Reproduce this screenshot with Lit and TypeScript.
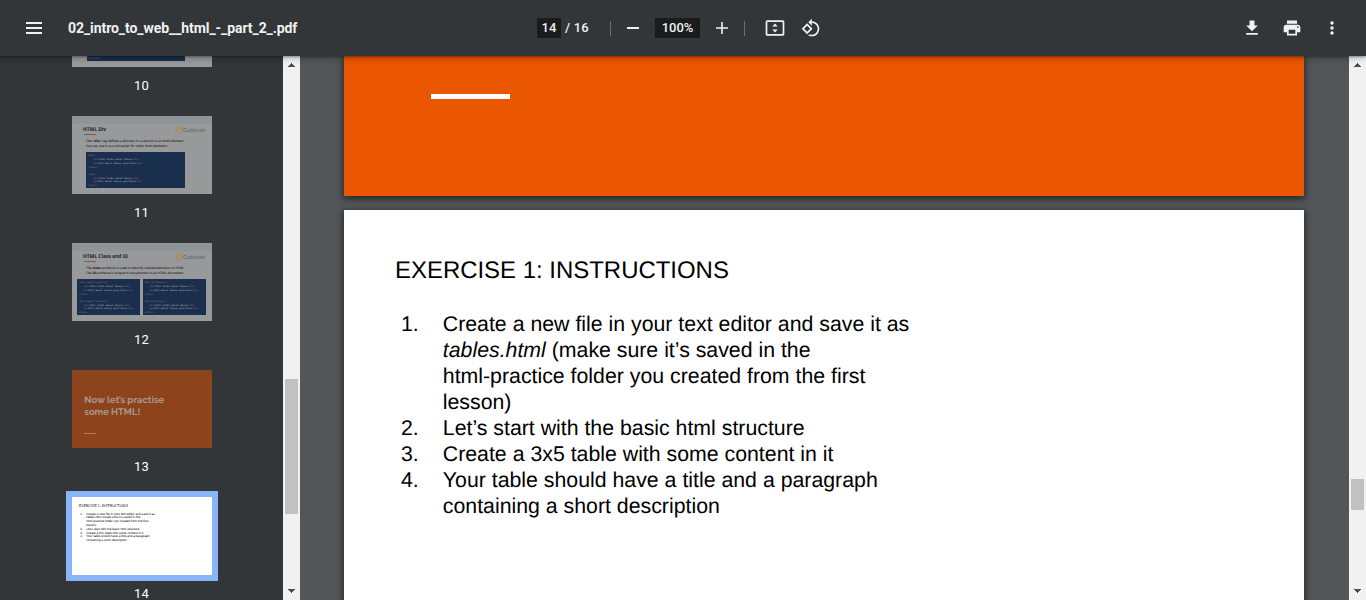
import { LitElement, html, css, svg } from "lit";
import { customElement } from "lit/decorators.js";

const icon = (path: string) =>
  html`<svg class="icon" viewBox="0 0 24 24"><path d=${path} /></svg>`;

const ICONS = {
  rotate:
    "M7.34 6.41L.86 12.9l6.49 6.48 6.49-6.48-6.5-6.49zM3.69 12.9l3.66-3.66L11 12.9l-3.66 3.66-3.65-3.66zm15.67-6.26C17.61 4.88 15.3 4 13 4V.76L8.76 5 13 9.24V6c1.79 0 3.58.68 4.95 2.05 2.73 2.73 2.73 7.17 0 9.9C16.58 19.32 14.79 20 13 20c-.97 0-1.94-.21-2.84-.61l-1.49 1.49C10.02 21.62 11.51 22 13 22c2.3 0 4.61-.88 6.36-2.64 3.52-3.51 3.52-9.21 0-12.72z",
  download: "M19 9h-4V3H9v6H5l7 7 7-7zM5 18v2h14v-2H5z",
  print:
    "M19 8H5c-1.66 0-3 1.34-3 3v6h4v4h12v-4h4v-6c0-1.66-1.34-3-3-3zm-3 11H8v-5h8v5zm3-7c-.55 0-1-.45-1-1s.45-1 1-1 1 .45 1 1-.45 1-1 1zm-1-9H6v4h12V3z",
  more:
    "M12 8c1.1 0 2-.9 2-2s-.9-2-2-2-2 .9-2 2 .9 2 2 2zm0 2c-1.1 0-2 .9-2 2s.9 2 2 2 2-.9 2-2-.9-2-2-2zm0 6c-1.1 0-2 .9-2 2s.9 2 2 2 2-.9 2-2-.9-2-2-2z",
};

type Line = [x: number, y: number, width: number, text: string];

const lines = (items: Line[], cls: string) =>
  items.map(
    ([x, y, w, t]) =>
      svg`<text class=${cls} x=${x} y=${y} textLength=${w} lengthAdjust="spacingAndGlyphs">${t}</text>`
  );

const slideFrame = (title: string, width: number) => svg`
  <rect width="140" height="78" fill="#97999a" />
  <rect width="140" height="8" fill="#8e9497" />
  <text class="title" x="11" y="15.3" textLength=${width} lengthAdjust="spacingAndGlyphs">${title}</text>
  <rect x="12" y="18" width="6" height="1" fill="#2c7a70" />
  <rect x="18" y="18" width="6" height="1" fill="#a14f2b" />
  <circle cx="107" cy="13.5" r="3.4" fill="none" stroke="#b5863c" stroke-width=".8" />
  <text class="badge" x="103.5" y="15.2" textLength="7.2" lengthAdjust="spacingAndGlyphs">&lt;/&gt;</text>
  <text class="brand" x="111" y="16" textLength="22.5" lengthAdjust="spacingAndGlyphs">Codetrain</text>`;

const codeBlock = (x: number, tag1: string, tag2: string, c1: string, c2: string) => svg`
  ${lines([[x, 40, tag1.length * 1.4, tag1], [x, 58.6, tag2.length * 1.4, tag2], [x, 51.5, 9, "</div>"], [x, 70.2, 9, "</div>"]], "tag")}
  ${[[43.8, c1, "h"], [47.6, c1, "p"], [62.5, c2, "h"], [66.3, c2, "p"]].map(([y, c, kind]) =>
    kind === "h"
      ? svg`<text class="code" x=${x + 5} y=${y} textLength="46" lengthAdjust="spacingAndGlyphs"><tspan class="mark">&lt;h1&gt;</tspan>This talks about ${c}<tspan class="mark">&lt;/h1&gt;</tspan></text>`
      : svg`<text class="code" x=${x + 5} y=${y} textLength="49" lengthAdjust="spacingAndGlyphs"><tspan class="mark">&lt;p&gt;</tspan>Info about ${c} goes here<tspan class="mark">&lt;/p&gt;</tspan></text>`
  )}`;

const thumbs = [
  {
    page: 10,
    art: svg`<rect width="140" height="78" fill="#97999a" /><rect x="15" y="36" width="98" height="36" fill="#192f4d" />
      ${lines([[16, 70, 13, "</html>"]], "tag")}`,
  },
  {
    page: 11,
    art: svg`${slideFrame("HTML Div", 23)}
      <text class="copy" x="14" y="26" textLength="98.5" lengthAdjust="spacingAndGlyphs">The <tspan class="strong">&lt;div&gt;</tspan> tag defines a division or a section in an html element.</text>
      ${lines([[14, 30.5, 82, "You can use it as a container for other html elements."]], "copy")}
      <rect x="14" y="36" width="99" height="36" fill="#192f4d" />
      ${codeBlock(16, "<div>", "<div>", "Ghana", "Kenya")}`,
  },
  {
    page: 12,
    art: svg`${slideFrame("HTML Class and ID", 45)}
      <text class="copy" x="14" y="26" textLength="99" lengthAdjust="spacingAndGlyphs">The <tspan class="strong">class</tspan> attribute is used to identify related elements in HTML.</text>
      <text class="copy" x="14" y="30.5" textLength="98" lengthAdjust="spacingAndGlyphs">The <tspan class="strong">id</tspan> attribute is unique to one element in an HTML document.</text>
      <rect x="5" y="36" width="63" height="36" fill="#192f4d" />
      <rect x="71" y="36" width="63" height="36" fill="#192f4d" />
      ${codeBlock(6.5, '<div class="country">', '<div class="country">', "Ghana", "Kenya")}
      ${codeBlock(72, '<div id="ghana">', '<div id="kenya">', "Ghana", "Kenya")}`,
  },
  {
    page: 13,
    art: svg`<rect width="140" height="78" fill="#8d431b" />
      ${lines([[12.3, 33, 80, "Now let’s practise"], [12.3, 44.7, 56, "some HTML!"]], "hero")}
      <rect x="12" y="63" width="12" height="1" fill="#a87f68" />`,
  },
  {
    page: 14,
    art: svg`<rect width="140" height="78" fill="#fff" />
      ${lines([[7, 10.1, 49, "EXERCISE 1: INSTRUCTIONS"]], "head")}
      ${lines([
        [8.3, 17.6, 2.5, "1."], [14.3, 17.6, 68.5, "Create a new file in your text editor and save it as"],
        [14.3, 21.4, 54, "tables.html (make sure it’s saved in the"],
        [14.3, 25.2, 62, "html-practice folder you created from the first"],
        [14.3, 29, 10, "lesson)"],
        [8.3, 32.8, 2.5, "2."], [14.3, 32.8, 53, "Let’s start with the basic html structure"],
        [8.3, 36.6, 2.5, "3."], [14.3, 36.6, 57, "Create a 3x5 table with some content in it"],
        [8.3, 40.4, 2.5, "4."], [14.3, 40.4, 63.5, "Your table should have a title and a paragraph"],
        [14.3, 44.2, 40.5, "containing a short description"],
      ], "step")}`,
  },
];

@customElement("pdf-toolbar")
class PdfToolbar extends LitElement {
  static styles = css`
    :host { display: grid; grid-template-columns: 535px 1fr auto; align-items: center; height: 56px;
      background: #323639; color: #f1f1f1; font: 500 13px/20px Roboto, sans-serif;
      box-shadow: 0 -2px 8px rgba(0,0,0,.09), 0 4px 8px rgba(0,0,0,.06), 0 1px 2px rgba(0,0,0,.3), 0 2px 6px rgba(0,0,0,.15);
      position: relative; z-index: 2; }
    .start, .center, .end { display: flex; align-items: center; }
    .start { padding-left: 26px; gap: 26px; }
    .name { font-weight: 700; font-size: 14px; letter-spacing: -.07px; }
    .center { padding-left: 2px; }
    .field { background: #191b1c; height: 20px; text-align: center; }
    .page { width: 24px; }
    .total { padding-left: 4px; width: 45px; white-space: pre; letter-spacing: .2px; }
    .zoom { width: 45px; margin: 0 16px; }
    .rule { width: 1px; height: 15px; background: #6b6e70; }
    .minus { margin-left: 16px; }
    .plus { margin-right: 16px; }
    .fit { margin: 0 16px 0 20px; }
    .end { padding-right: 24px; gap: 20px; }
    svg { display: block; fill: #f1f1f1; }
    .icon { width: 20px; height: 20px; }
  `;
  render() {
    return html`
      <div class="start">
        <svg width="16" height="12" viewBox="0 0 16 12"><path d="M0 0h16v2H0zM0 5h16v2H0zM0 10h16v2H0z" /></svg>
        <span class="name">02_intro_to_web__html_-_part_2_.pdf</span>
      </div>
      <div class="center">
        <span class="field page">14</span><span class="total">/ 16</span>
        <span class="rule"></span>
        <svg class="minus" width="12" height="12" viewBox="0 0 12 12"><path d="M0 5h12v2H0z" /></svg>
        <span class="field zoom">100%</span>
        <svg class="plus" width="12" height="12" viewBox="0 0 12 12"><path d="M5.2 0h1.6v5.2H12v1.6H6.8V12H5.2V6.8H0V5.2h5.2z" /></svg>
        <span class="rule"></span>
        <svg class="fit" width="20" height="16" viewBox="0 0 20 16">
          <rect x="1.5" y="1.2" width="17" height="13.6" rx=".9" fill="none" stroke="#f1f1f1" stroke-width="1.7" />
          <path d="M7.3 6.6L10 3.4l2.7 3.2zM7.3 9.4l2.7 3.2 2.7-3.2z" />
        </svg>
        ${icon(ICONS.rotate)}
      </div>
      <div class="end">${icon(ICONS.download)}${icon(ICONS.print)}${icon(ICONS.more)}</div>
    `;
  }
}

@customElement("scroll-rail")
class ScrollRail extends LitElement {
  static properties = { before: { type: Number }, size: { type: Number } };
  declare before: number;
  declare size: number;
  static styles = css`
    :host { display: flex; flex-direction: column; align-items: center; width: 17px; height: 544px; background: #f1f1f1; flex: none; }
    svg { display: block; width: 17px; height: 17px; flex: none; fill: #505050; }
    .thumb { width: 13px; background: #c1c1c1; flex: none; }
    .rest { flex: 1; }
  `;
  render() {
    return html`
      <svg viewBox="0 0 17 17"><path d="M8 7h1v1h1v1h1v1h1v1H5v-1h1V9h1V8h1z" /></svg>
      <div style="height:${this.before}px"></div>
      <div class="thumb" style="height:${this.size}px"></div>
      <div class="rest"></div>
      <svg viewBox="0 0 17 17"><path d="M5 6h7v1h-1v1h-1v1H9v1H8V9H7V8H6V7H5z" /></svg>
    `;
  }
}

@customElement("thumb-list")
class ThumbList extends LitElement {
  static styles = css`
    :host { display: flex; flex-direction: column; justify-content: flex-start; align-items: center; width: 283px; height: 544px;
      overflow: hidden; background: #323639; flex: none; }
    .item { display: flex; flex-direction: column; align-items: center; height: 127px; flex: none; }
    .item:first-child { margin-top: -67px; }
    .slide { display: block; width: 140px; height: 78px; font-family: "Open Sans", sans-serif; text-rendering: geometricPrecision; }
    .current { outline: 6px solid #8ab4f8; }
    .label { color: #fff; font: 400 13px/20px Roboto, sans-serif; margin-top: 9px; letter-spacing: .2px; }
    .title { font-size: 5.4px; font-weight: 700; fill: #222426; }
    .badge { font-size: 4.8px; font-weight: 800; fill: #b5863c; }
    .brand { font: 5.6px Lato, sans-serif; fill: #55625f; }
    .copy { font-size: 3.2px; font-weight: 600; fill: #222; }
    .strong { font-weight: 800; }
    .tag { font: 700 2.3px "Liberation Mono", monospace; fill: #86606a; }
    .code { font: 700 2.3px "Liberation Mono", monospace; fill: #979ba2; }
    .mark { fill: #86606a; }
    .hero { font-family: Raleway, "Open Sans", sans-serif; font-size: 9.4px; font-weight: 700; fill: #a9978e; }
    .head { font: 3.9px "Liberation Sans", Arial, sans-serif; fill: #000; }
    .step { font: 3.1px "Liberation Sans", Arial, sans-serif; fill: #000; }
  `;
  render() {
    return thumbs.map(
      (t) => html`<div class="item">
        <svg class="slide ${t.page === 14 ? "current" : ""}" viewBox="0 0 140 78">${t.art}</svg>
        <span class="label">${t.page}</span>
      </div>`
    );
  }
}

@customElement("pdf-pages")
class PdfPages extends LitElement {
  static styles = css`
    :host { display: flex; flex-direction: column; gap: 14px; padding-left: 44px; width: 1005px; height: 544px; overflow: hidden; background: #525659; }
    .page { width: 960px; flex: none; box-sizing: border-box; box-shadow: 0 2px 6px 1px rgba(0,0,0,.55); }
    .orange { height: 140px; background: #eb5600; padding: 38px 0 0 87px; }
    .bar { width: 79px; height: 5px; background: #fff; }
    .white { height: 540px; background: #fff; color: #000; padding: 46px 0 0 51px; font-family: "Liberation Sans", Arial, sans-serif; text-rendering: geometricPrecision; }
    h1 { margin: 0; font-size: 23.95px; font-weight: 400; line-height: 30px; white-space: nowrap; }
    ol { list-style: none; margin: 25px 0 0 6px; padding: 0; font-size: 21.31px; line-height: 26px; }
    li { display: grid; grid-template-columns: 41.8px auto; white-space: nowrap; }
  `;
  render() {
    return html`
      <section class="page orange"><div class="bar"></div></section>
      <section class="page white">
        <h1>EXERCISE 1: INSTRUCTIONS</h1>
        <ol>
          <li><span>1.</span><span>Create a new file in your text editor and save it as<br /><i>tables.html</i> (make sure it’s saved in the<br />html-practice folder you created from the first<br />lesson)</span></li>
          <li><span>2.</span><span>Let’s start with the basic html structure</span></li>
          <li><span>3.</span><span>Create a 3x5 table with some content in it</span></li>
          <li><span>4.</span><span>Your table should have a title and a paragraph<br />containing a short description</span></li>
        </ol>
      </section>
    `;
  }
}

@customElement("app-root")
class AppRoot extends LitElement {
  static styles = css`
    :host { display: block; width: 1366px; height: 600px; overflow: hidden; background: #525659; }
    .body { display: flex; height: 544px; }
  `;
  render() {
    return html`
      <pdf-toolbar></pdf-toolbar>
      <div class="body">
        <thumb-list></thumb-list>
        <scroll-rail .before=${306} .size=${135}></scroll-rail>
        <pdf-pages></pdf-pages>
        <scroll-rail .before=${406} .size=${31}></scroll-rail>
      </div>
    `;
  }
}
